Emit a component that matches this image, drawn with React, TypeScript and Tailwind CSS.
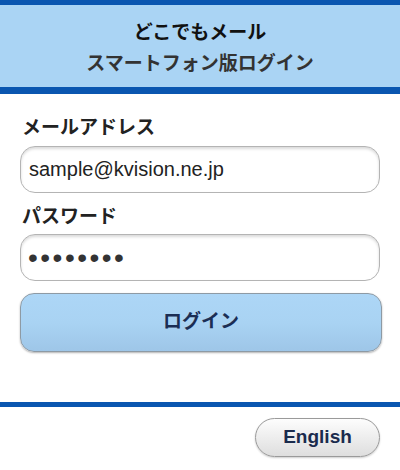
import React from 'react';

const jp = "font-['Liberation_Sans','Noto_Sans_CJK_JP',sans-serif]";

const App: React.FC = () => {
  return (
    <div className={`w-[400px] h-[470px] bg-white ${jp} overflow-hidden`}>
      {/* Header */}
      <div className="border-t-[5px] border-b-[7px] border-[#0a56b0] bg-[#aad4f4] h-[94px] flex flex-col items-center pt-[14px]">
        <h1 className="text-[19px] leading-[28px] font-bold text-[#111]">どこでもメール</h1>
        <h2 className="text-[19px] leading-[28px] font-bold text-[#333] mt-[3px]">スマートフォン版ログイン</h2>
      </div>

      {/* Form */}
      <form className="px-[20px] pt-[23px]" onSubmit={(e) => e.preventDefault()}>
        <label className="block text-[19px] leading-[22px] font-bold text-[#222] pl-[2px]">メールアドレス</label>
        <input
          type="text"
          defaultValue="sample@kvision.ne.jp"
          className="mt-[7px] block w-full h-[47px] rounded-[15px] border border-[#b4b4b4] bg-white px-[8px] text-[20px] text-[#222] shadow-[inset_0_2px_3px_rgba(0,0,0,0.15)] outline-none"
        />
        <label className="block mt-[13px] text-[19px] leading-[22px] font-bold text-[#222] pl-[2px]">パスワード</label>
        <input
          type="password"
          defaultValue="password"
          className="mt-[6px] block w-full h-[47px] rounded-[15px] border border-[#b4b4b4] bg-white px-[7px] text-[28px] text-[#333] tracking-[2.5px] shadow-[inset_0_2px_3px_rgba(0,0,0,0.15)] outline-none"
        />
        <button
          type="submit"
          className="mt-[12px] block w-[362px] h-[59px] rounded-[14px] border border-[#8e9aa4] bg-gradient-to-b from-[#add6f6] via-[#a9d3f3] to-[#9ec6e8] text-[19px] font-bold text-[#1b2e54] shadow-[0_1px_2px_rgba(0,0,0,0.3)]"
        >
          ログイン
        </button>
      </form>

      {/* Footer */}
      <div className="mt-[50px] h-[5px] bg-[#0a56b0]" />
      <div className="flex justify-end pr-[20px] pt-[11px]">
        <button className="w-[125px] h-[39px] rounded-full border border-[#9a9a9a] bg-gradient-to-b from-[#fdfdfd] to-[#dedede] text-[19px] font-bold text-[#1a2b4d] shadow-[0_1px_2px_rgba(0,0,0,0.2)]">
          English
        </button>
      </div>
    </div>
  );
};

export default App;
